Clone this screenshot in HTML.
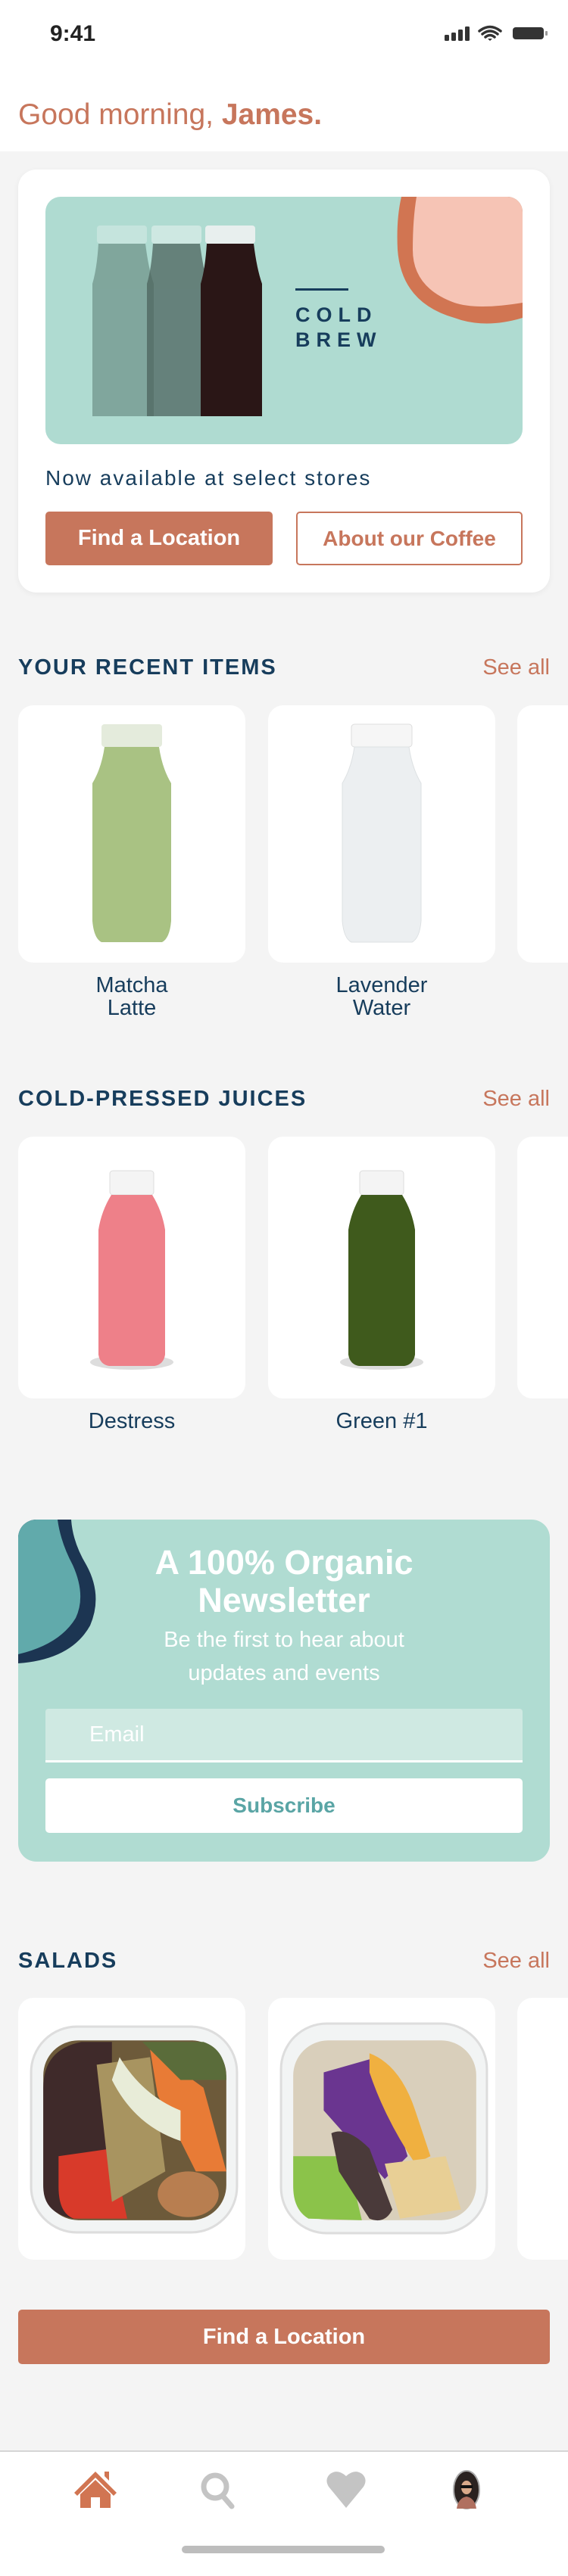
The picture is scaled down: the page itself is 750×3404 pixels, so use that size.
<!DOCTYPE html>
<html><head><meta charset="utf-8">
<style>
*{margin:0;padding:0;box-sizing:border-box}
body{width:750px;height:3404px;background:#f4f4f4;font-family:"Liberation Sans",sans-serif;position:relative;overflow:hidden}
.abs{position:absolute}
.navy{color:#173d5c}
.hdr{position:absolute;left:24px;font-size:29px;font-weight:bold;letter-spacing:2px;color:#173d5c;line-height:36px}
.see{position:absolute;right:24px;font-size:29px;color:#c7765c;line-height:36px}
.card{position:absolute;background:#fff;border-radius:20px;width:300px}
.lbl{position:absolute;width:300px;text-align:center;font-size:29px;color:#173d5c;line-height:30px}
.btn{position:absolute;border-radius:5px;text-align:center;font-weight:bold;font-size:29px}
</style></head><body>
<div class="abs" style="left:0;top:0;width:750px;height:200px;background:#fff"></div>
<div class="abs" style="left:66px;top:28px;font-size:30px;font-weight:bold;color:#222">9:41</div>
<svg class="abs" style="left:585px;top:32px" width="140" height="24" viewBox="0 0 140 24">
<rect x="2" y="14" width="6" height="8" rx="1.5" fill="#333"/><rect x="11" y="11" width="6" height="11" rx="1.5" fill="#333"/><rect x="20" y="7" width="6" height="15" rx="1.5" fill="#333"/><rect x="29" y="3" width="6" height="19" rx="1.5" fill="#333"/>
<path d="M48 9 Q62 -2 76 9 M52 13 Q62 5 72 13 M56 17 Q62 12 68 17" stroke="#333" stroke-width="3.5" fill="none" stroke-linecap="round"/><path d="M59 19 L62 22 L65 19Z" fill="#333"/>
<rect x="92" y="4" width="41" height="16" rx="4" fill="#333"/><rect x="135" y="9" width="3" height="6" rx="1" fill="#999"/>
</svg>
<div class="abs" style="left:24px;top:130px;font-size:39px;color:#c7765c">Good morning, <b>James.</b></div>

<div class="abs" style="left:24px;top:224px;width:702px;height:559px;background:#fff;border-radius:24px;box-shadow:0 2px 8px rgba(0,0,0,.05)"></div>
<svg class="abs" style="left:60px;top:260px" width="630" height="327" viewBox="0 0 630 327">
<defs><clipPath id="bc"><rect width="630" height="327" rx="20"/></clipPath></defs>
<g clip-path="url(#bc)">
<rect width="630" height="327" fill="#afdbd1"/>
<path d="M470 0 L630 0 L630 160 Q580 175 540 160 Q470 140 465 70 Q463 30 470 0Z" fill="#d17552"/>
<path d="M490 0 L630 0 L630 140 Q570 150 540 140 Q485 120 485 70 Q485 30 490 0Z" fill="#f6c4b5"/>
<g opacity=".55"><rect x="68" y="38" width="66" height="24" rx="4" fill="#d8ece7"/><path d="M70 62 L132 62 Q136 95 143 115 L143 290 L62 290 L62 115 Q68 95 70 62Z" fill="#5a7a72"/></g>
<g opacity=".75"><rect x="140" y="38" width="66" height="24" rx="4" fill="#d8ece7"/><path d="M142 62 L204 62 Q208 95 215 115 L215 290 L134 290 L134 115 Q140 95 142 62Z" fill="#4c635d"/></g>
<rect x="211" y="38" width="66" height="24" rx="4" fill="#e8efee"/><path d="M213 62 L275 62 Q279 95 286 115 L286 290 L205 290 L205 115 Q211 95 213 62Z" fill="#2a1616"/>
<rect x="330" y="121" width="70" height="3" fill="#173d5c"/>
<text x="330" y="165" font-family="Liberation Sans" font-weight="bold" font-size="27" letter-spacing="8" fill="#173d5c">COLD</text>
<text x="330" y="198" font-family="Liberation Sans" font-weight="bold" font-size="27" letter-spacing="8" fill="#173d5c">BREW</text>
</g></svg>
<div class="abs navy" style="left:60px;top:616px;font-size:28px;letter-spacing:2px">Now available at select stores</div>
<div class="btn" style="left:60px;top:676px;width:300px;height:71px;background:#c7765c;color:#fff;line-height:71px">Find a Location</div>
<div class="btn" style="left:391px;top:676px;width:299px;height:71px;border:2px solid #c7765c;color:#c7765c;line-height:67px;font-size:28px;font-weight:bold">About our Coffee</div>

<div class="hdr" style="top:864px">YOUR RECENT ITEMS</div>
<div class="see" style="top:864px">See all</div>
<div class="card" style="left:24px;top:932px;height:340px"></div>
<div class="card" style="left:354px;top:932px;height:340px"></div>
<div class="card" style="left:683px;top:932px;height:340px"></div>
<svg class="abs" style="left:114px;top:955px" width="120" height="300" viewBox="0 0 120 300">
<rect x="20" y="2" width="80" height="30" rx="4" fill="#e4ebdc"/><path d="M24 32 L96 32 Q100 60 112 80 L112 262 Q110 285 100 290 L20 290 Q10 285 8 262 L8 80 Q20 60 24 32Z" fill="#a9c283"/>
</svg>
<svg class="abs" style="left:444px;top:955px" width="120" height="300" viewBox="0 0 120 300">
<rect x="20" y="2" width="80" height="30" rx="4" fill="#f6f6f6" stroke="#ddd"/><path d="M24 32 L96 32 Q100 60 112 80 L112 262 Q110 285 100 290 L20 290 Q10 285 8 262 L8 80 Q20 60 24 32Z" fill="#eceff1" stroke="#dde1e3"/>
</svg>
<div class="lbl" style="left:24px;top:1287px">Matcha<br>Latte</div>
<div class="lbl" style="left:354px;top:1287px">Lavender<br>Water</div>

<div class="hdr" style="top:1434px">COLD-PRESSED JUICES</div>
<div class="see" style="top:1434px">See all</div>
<div class="card" style="left:24px;top:1502px;height:346px"></div>
<div class="card" style="left:354px;top:1502px;height:346px"></div>
<div class="card" style="left:683px;top:1502px;height:346px"></div>
<svg class="abs" style="left:114px;top:1545px" width="120" height="270" viewBox="0 0 120 270">
<ellipse cx="60" cy="255" rx="55" ry="10" fill="#bbb" opacity=".5"/>
<rect x="31" y="2" width="58" height="32" rx="4" fill="#f4f4f4" stroke="#ddd"/><path d="M33 34 L87 34 Q100 55 104 80 L104 245 Q102 258 90 260 L30 260 Q18 258 16 245 L16 80 Q20 55 33 34Z" fill="#ee8089"/>
</svg>
<svg class="abs" style="left:444px;top:1545px" width="120" height="270" viewBox="0 0 120 270">
<ellipse cx="60" cy="255" rx="55" ry="10" fill="#bbb" opacity=".5"/>
<rect x="31" y="2" width="58" height="32" rx="4" fill="#f4f4f4" stroke="#ddd"/><path d="M33 34 L87 34 Q100 55 104 80 L104 245 Q102 258 90 260 L30 260 Q18 258 16 245 L16 80 Q20 55 33 34Z" fill="#3f5a1c"/>
</svg>
<div class="lbl" style="left:24px;top:1863px">Destress</div>
<div class="lbl" style="left:354px;top:1863px">Green #1</div>

<svg class="abs" style="left:24px;top:2008px" width="702" height="452" viewBox="0 0 702 452">
<defs><clipPath id="nc"><rect width="702" height="452" rx="24"/></clipPath></defs>
<g clip-path="url(#nc)">
<rect width="702" height="452" fill="#b0dcd2"/>
<path d="M0 0 L70 0 Q72 30 90 60 Q112 100 95 140 Q70 185 0 190Z" fill="#1c3552"/>
<path d="M0 0 L52 0 Q56 30 72 60 Q90 100 76 130 Q55 165 0 178Z" fill="#61aaab"/>
</g></svg>
<div class="abs" style="left:24px;top:2040px;width:702px;text-align:center;color:#fff;font-size:45px;font-weight:bold;line-height:50px">A 100% Organic<br>Newsletter</div>
<div class="abs" style="left:24px;top:2145px;width:702px;text-align:center;color:#fff;font-size:29px;line-height:44px">Be the first to hear about<br>updates and events</div>
<div class="abs" style="left:60px;top:2258px;width:630px;height:71px;background:#cfe9e2;border-bottom:3px solid #fff;border-radius:4px 4px 0 0"></div>
<div class="abs" style="left:118px;top:2276px;font-size:29px;color:#fff">Email</div>
<div class="btn" style="left:60px;top:2350px;width:630px;height:72px;background:#fff;color:#5aa5a5;line-height:72px;font-size:28px">Subscribe</div>

<div class="hdr" style="top:2573px">SALADS</div>
<div class="see" style="top:2573px">See all</div>
<div class="card" style="left:24px;top:2640px;height:346px"></div>
<div class="card" style="left:354px;top:2640px;height:346px"></div>
<div class="card" style="left:683px;top:2640px;height:346px"></div>
<svg class="abs" style="left:36px;top:2668px" width="284" height="292" viewBox="0 0 280 290">
<rect x="4" y="10" width="270" height="270" rx="60" fill="#f2f4f4" stroke="#ddd" stroke-width="3"/>
<rect x="20" y="28" width="240" height="236" rx="46" fill="#6d5a3a"/>
<path d="M20 90 Q20 40 70 30 L110 30 L110 260 L60 262 Q20 255 20 220Z" fill="#3f2a2a"/>
<path d="M40 180 L110 170 L130 262 L60 262 Q40 255 40 220Z" fill="#d83a2a"/>
<path d="M90 60 L160 50 L180 200 L110 240Z" fill="#a89460"/>
<path d="M160 40 L230 90 L260 200 L220 200 L170 100Z" fill="#e87b36"/>
<path d="M120 50 Q150 100 200 120 L200 160 Q140 140 110 80Z" fill="#e8ecd8"/>
<ellipse cx="210" cy="230" rx="40" ry="30" fill="#b87e50"/>
<path d="M150 30 L230 30 Q260 40 260 80 L200 80Z" fill="#5a6c3a"/>
</svg>
<svg class="abs" style="left:366px;top:2668px" width="284" height="292" viewBox="0 0 280 290">
<rect x="4" y="6" width="270" height="275" rx="60" fill="#f2f4f4" stroke="#ddd" stroke-width="3"/>
<rect x="20" y="28" width="240" height="236" rx="46" fill="#d9cfbb"/>
<path d="M60 70 L130 50 L170 180 L140 210 L60 120Z" fill="#6a3590"/>
<path d="M120 45 Q160 60 180 120 L200 180 L180 190 Q140 130 120 70Z" fill="#f0b040"/>
<path d="M20 180 L90 180 L110 264 L40 262 Q20 250 20 220Z" fill="#8bc34a"/>
<path d="M70 150 Q90 140 120 170 L150 250 Q140 270 120 262 L80 200Z" fill="#4a3a3a"/>
<path d="M140 190 L220 180 L240 250 L160 262Z" fill="#e8cf95"/>
</svg>

<div class="btn" style="left:24px;top:3052px;width:702px;height:72px;background:#c7765c;color:#fff;line-height:72px;font-size:29px">Find a Location</div>

<div class="abs" style="left:0;top:3238px;width:750px;height:166px;background:#fff;border-top:2px solid #d6d6d6"></div>
<svg class="abs" style="left:96px;top:3264px" width="60" height="52" viewBox="0 0 60 52">
<path d="M30 2 L58 30 L54 34 L30 10 L6 34 L2 30Z M42 2 L48 2 L48 14 L42 8Z" fill="#d17552"/>
<path d="M10 32 L30 13 L50 32 L50 50 L36 50 L36 36 L24 36 L24 50 L10 50Z" fill="#d17552"/>
</svg>
<svg class="abs" style="left:264px;top:3264px" width="50" height="52" viewBox="0 0 50 52">
<circle cx="20" cy="22" r="15" stroke="#c4c4c4" stroke-width="7" fill="none"/><path d="M30 34 L42 48" stroke="#c4c4c4" stroke-width="7" stroke-linecap="round"/>
</svg>
<svg class="abs" style="left:428px;top:3264px" width="58" height="52" viewBox="0 0 58 52">
<path d="M29 50 L6 22 Q0 12 8 5 Q18 -2 29 8 Q40 -2 50 5 Q58 12 52 22Z" fill="#c4c4c4"/>
</svg>
<svg class="abs" style="left:597px;top:3263px" width="38" height="54" viewBox="0 0 38 54">
<ellipse cx="19" cy="27" rx="17" ry="25" fill="#2a2220" stroke="#aaa" stroke-width="2"/>
<ellipse cx="19" cy="24" rx="7" ry="9" fill="#d9a98a"/>
<path d="M6 52 Q8 38 19 36 Q30 38 32 52Z" fill="#b07060"/>
<rect x="11" y="21" width="16" height="4" fill="#111"/>
</svg>
<div class="abs" style="left:240px;top:3364px;width:268px;height:10px;border-radius:5px;background:#bdbdbd"></div>
</body></html>
